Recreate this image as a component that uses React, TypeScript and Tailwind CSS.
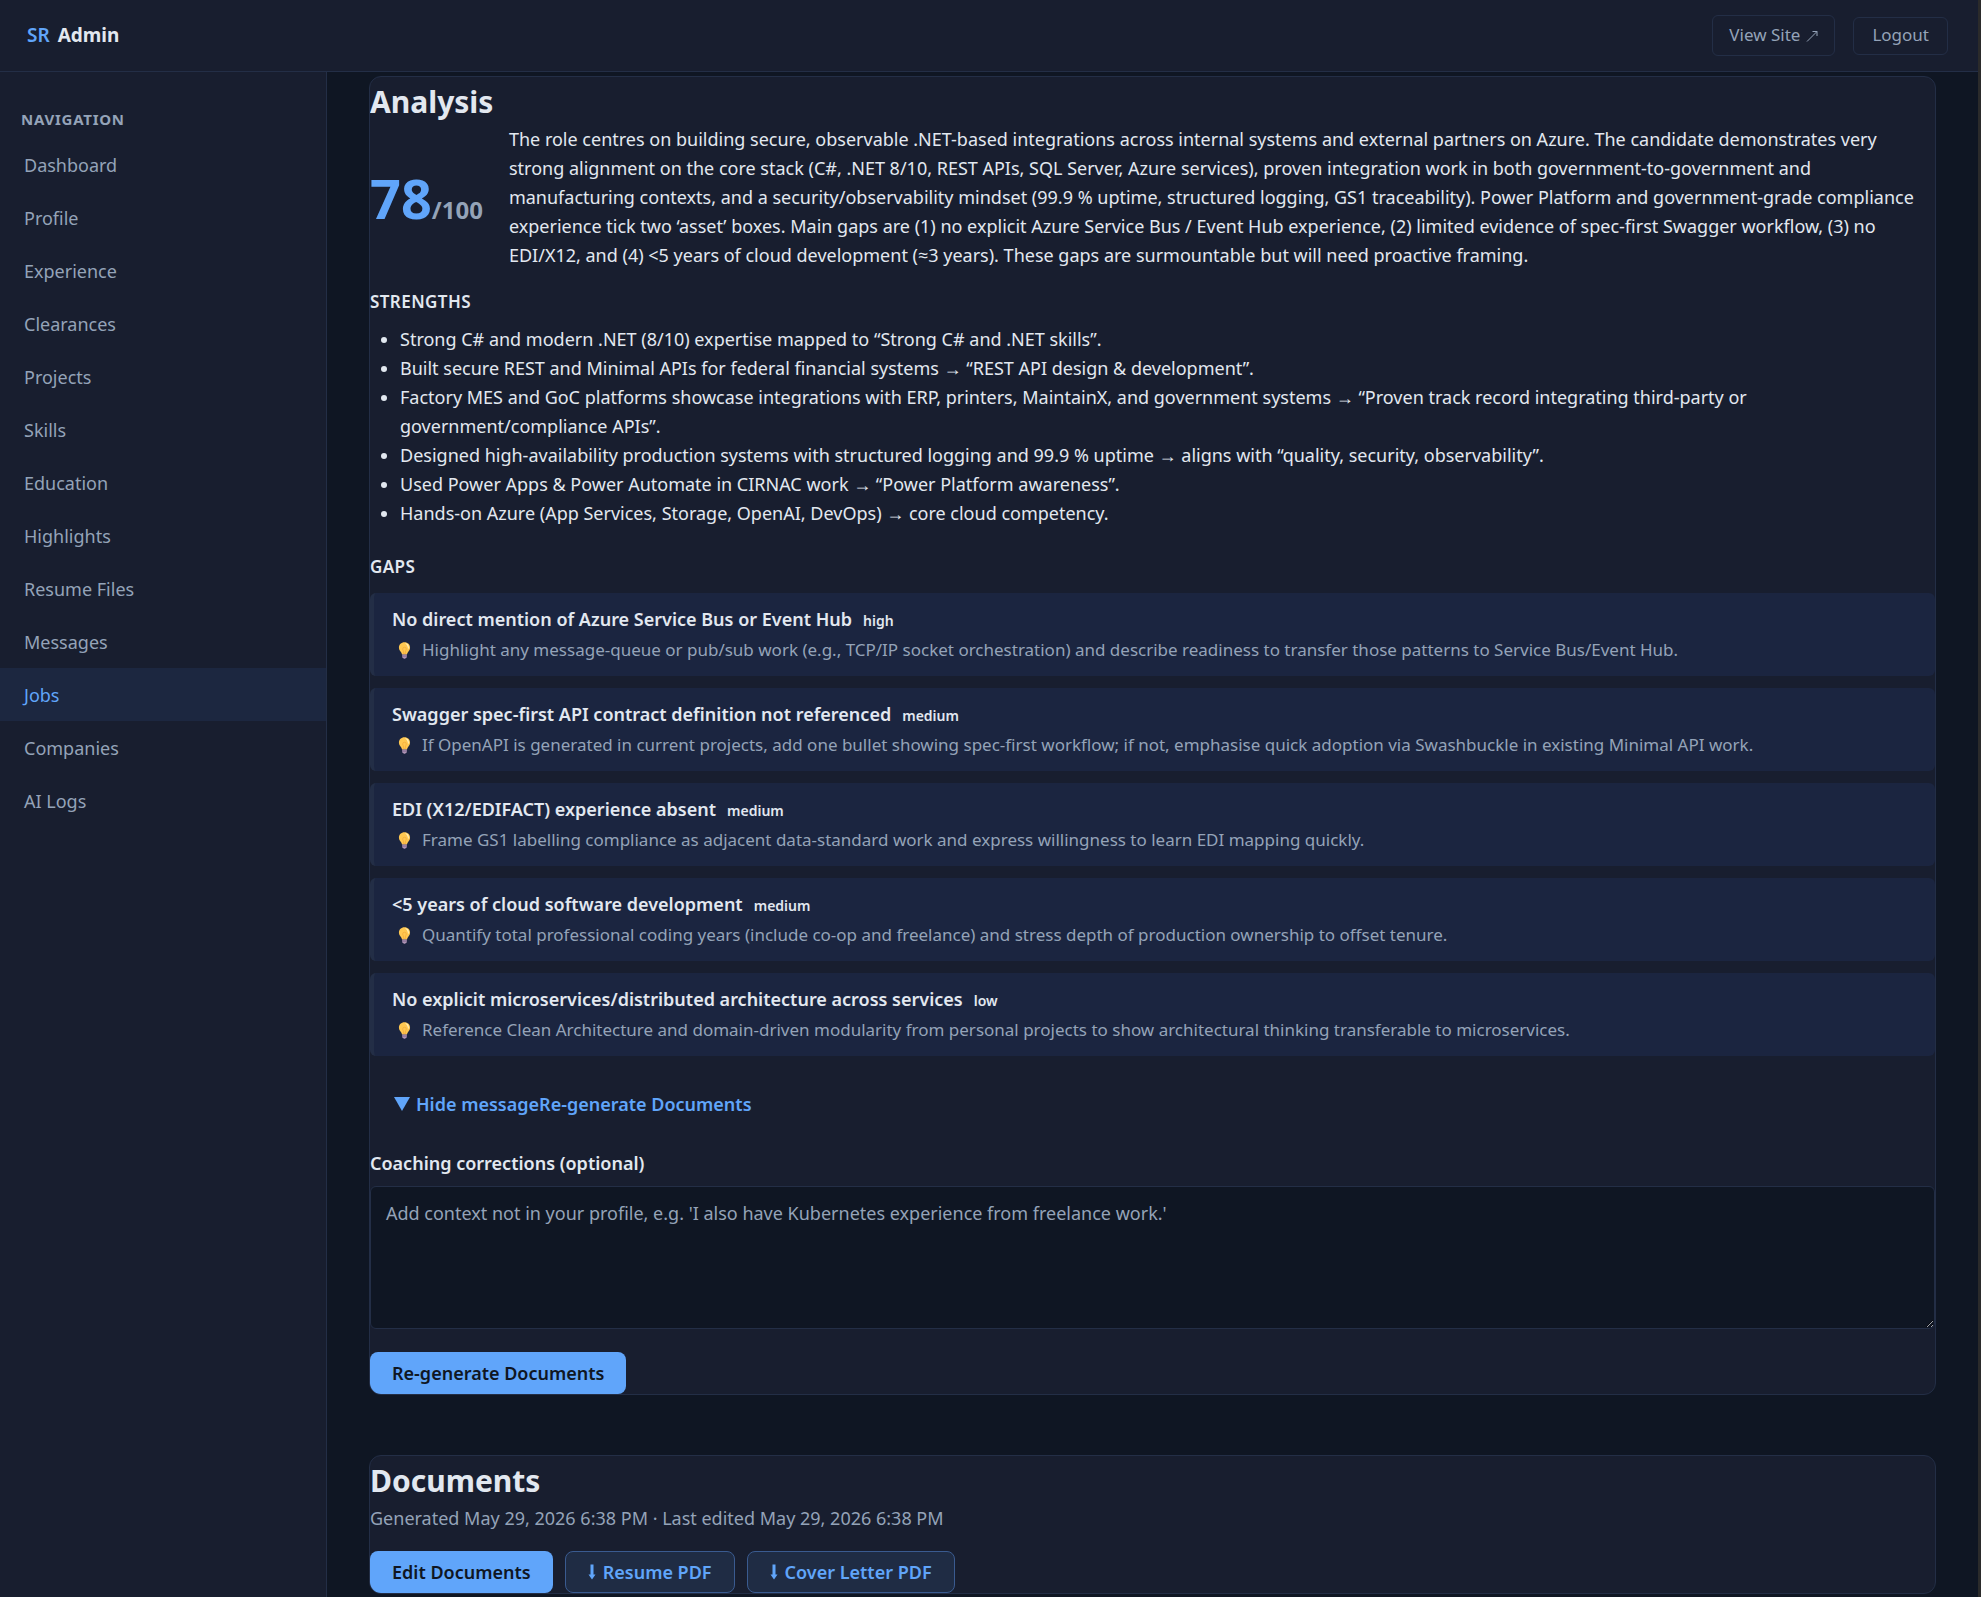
import { useState } from "react";

const navItems = [
  "Dashboard",
  "Profile",
  "Experience",
  "Clearances",
  "Projects",
  "Skills",
  "Education",
  "Highlights",
  "Resume Files",
  "Messages",
  "Jobs",
  "Companies",
  "AI Logs",
];

const strengths = [
  "Strong C# and modern .NET (8/10) expertise mapped to “Strong C# and .NET skills”.",
  "Built secure REST and Minimal APIs for federal financial systems → “REST API design & development”.",
  "Factory MES and GoC platforms showcase integrations with ERP, printers, MaintainX, and government systems → “Proven track record integrating third-party or government/compliance APIs”.",
  "Designed high-availability production systems with structured logging and 99.9 % uptime → aligns with “quality, security, observability”.",
  "Used Power Apps & Power Automate in CIRNAC work → “Power Platform awareness”.",
  "Hands-on Azure (App Services, Storage, OpenAI, DevOps) → core cloud competency.",
];

const gaps = [
  {
    title: "No direct mention of Azure Service Bus or Event Hub",
    severity: "high",
    tip: "Highlight any message-queue or pub/sub work (e.g., TCP/IP socket orchestration) and describe readiness to transfer those patterns to Service Bus/Event Hub.",
  },
  {
    title: "Swagger spec-first API contract definition not referenced",
    severity: "medium",
    tip: "If OpenAPI is generated in current projects, add one bullet showing spec-first workflow; if not, emphasise quick adoption via Swashbuckle in existing Minimal API work.",
  },
  {
    title: "EDI (X12/EDIFACT) experience absent",
    severity: "medium",
    tip: "Frame GS1 labelling compliance as adjacent data-standard work and express willingness to learn EDI mapping quickly.",
  },
  {
    title: "<5 years of cloud software development",
    severity: "medium",
    tip: "Quantify total professional coding years (include co-op and freelance) and stress depth of production ownership to offset tenure.",
  },
  {
    title: "No explicit microservices/distributed architecture across services",
    severity: "low",
    tip: "Reference Clean Architecture and domain-driven modularity from personal projects to show architectural thinking transferable to microservices.",
  },
];

function BulbIcon() {
  return (
    <svg viewBox="0 0 14 20" className="h-[19px] w-[13px] shrink-0" aria-hidden="true">
      <path d="M7 1C3.400 1 1 3.500 1 6.700c0 2 .9 3.300 1.900 4.600.8 1 1.200 1.900 1.400 3h5.400c.2-1.100.6-2 1.400-3 1-1.300 1.900-2.600 1.900-4.600C13 3.500 10.600 1 7 1z" fill="#ffc850" />
      <path d="M7.500 2c2.600.2 4.200 2 4.200 4.500 0 .8-.3 1.500-.8 2.100C10.700 5.600 9.600 3.500 7.500 2z" fill="#fff3c4" />
      <path d="M5 8.500a2 2 0 0 1 4 0c0 1.200-1 1.500-1 3v2H6v-2c0-1.500-1-1.800-1-3z" fill="none" stroke="#f4ab3c" strokeWidth=".8" />
      <path d="M4.500 14.300h5v2.500c0 .8-.6 1.300-1.200 1.400l-.5.800H6.200l-.5-.8c-.6-.1-1.200-.6-1.200-1.400z" fill="#b094b5" />
      <path d="M4.500 16h5" stroke="#6f5a83" strokeWidth=".8" />
    </svg>
  );
}

function DownArrow() {
  return (
    <svg viewBox="0 0 8 18" className="h-[18px] w-2" fill="currentColor" aria-hidden="true">
      <path d="M2.500 1.500h3v10H7.500L4 16.500.5 11.500h2z" />
    </svg>
  );
}

function PdfButton({ label }: { label: string }) {
  return (
    <button className="flex h-[42px] items-center gap-[7px] rounded-lg border border-[#3a5b90] bg-[#1f2c44] px-[22px] font-semibold text-[#60a5fa]">
      <DownArrow />
      {label}
    </button>
  );
}

export default function App() {
  const [open, setOpen] = useState(true);
  const [notes, setNotes] = useState("");

  return (
    <div className="flex min-h-screen flex-col border-r-[3px] border-[#2b2b2b] bg-[#0f1623] font-['Noto_Sans','Open_Sans',sans-serif] text-lg text-[#e2e8f0]">
      {/* Top bar */}
      <header className="flex h-[72px] shrink-0 items-center justify-between border-b border-[#232e46] bg-[#181e2f] pr-[30px] pl-[27px]">
        <div className="flex items-center gap-2">
          <span className="text-[19px] font-semibold text-[#60a5fa]">SR</span>
          <span className="text-[19px] font-bold">Admin</span>
        </div>
        <div className="flex items-center gap-[18px]">
          <a href="#site" className="flex h-[41px] items-center gap-1.5 rounded-md border border-[#232e46] px-4 text-[17px] text-[#94a3b8]">
            View Site
            <svg viewBox="0 0 12 12" className="size-3" fill="none" stroke="currentColor" strokeWidth="1" aria-hidden="true">
              <path d="M1 11.500 11 1.500M6.500 1.500H11V6" />
            </svg>
          </a>
          <button className="h-[38px] rounded-md border border-[#232e46] px-[18px] text-[17px] text-[#94a3b8]">Logout</button>
        </div>
      </header>

      <div className="flex flex-1">
        {/* Sidebar */}
        <aside className="w-[327px] shrink-0 border-r border-[#232e46] bg-[#181e2f] pt-9">
          <h2 className="mb-[7px] px-[21px] text-[15px] leading-[23px] font-bold tracking-wider text-[#94a3b8] uppercase">Navigation</h2>
          <nav>
            {navItems.map((item) => (
              <a
                key={item}
                href={`#${item.toLowerCase().replace(" ", "-")}`}
                className={`flex h-[53px] items-center px-6 ${item === "Jobs" ? "bg-[#1c2740] text-[#60a5fa]" : "text-[#94a3b8]"}`}
              >
                {item}
              </a>
            ))}
          </nav>
        </aside>

        <main className="min-w-0 flex-1 px-[42px] pt-1">
          {/* Analysis */}
          <section className="overflow-hidden rounded-xl border border-[#232e46] bg-[#181e2f]">
            <h2 className="mt-0.5 text-[30px] leading-[45px] font-bold">Analysis</h2>
            <div className="mt-px flex items-center gap-[26px]">
              <div className="flex items-baseline font-bold">
                <span className="text-[54px] text-[#60a5fa]">78</span>
                <span className="text-2xl text-[#94a3b8]">/100</span>
              </div>
              <p className="leading-[29px]">
                The role centres on building secure, observable .NET-based integrations across internal systems and external partners on Azure. The candidate demonstrates very strong alignment on the core stack (C#, .NET 8/10, REST APIs, SQL Server, Azure services), proven integration work in both government-to-government and manufacturing contexts, and a security/observability mindset (99.9 % uptime, structured logging, GS1 traceability). Power Platform and government-grade compliance experience tick two ‘asset’ boxes. Main gaps are (1) no explicit Azure Service Bus / Event Hub experience, (2) limited evidence of spec-first Swagger workflow, (3) no EDI/X12, and (4) &lt;5 years of cloud development (≈3 years). These gaps are surmountable but will need proactive framing.
              </p>
            </div>

            <h3 className="mt-[17px] text-[17px] leading-[29px] font-semibold tracking-wide uppercase">Strengths</h3>
            <ul className="mt-[9px] list-disc pl-[30px] leading-[29px]">
              {strengths.map((s) => (
                <li key={s}>{s}</li>
              ))}
            </ul>

            <h3 className="mt-6 text-[17px] leading-[29px] font-semibold tracking-wide uppercase">Gaps</h3>
            <div className="mt-3 flex flex-col gap-3">
              {gaps.map((gap) => (
                <div key={gap.title} className="rounded-md border-l-4 border-[#232e46] bg-[#1b2540] px-[18px] py-3">
                  <div className="flex items-baseline gap-[11px] leading-[29px] font-semibold">
                    <span>{gap.title}</span>
                    <span className="text-sm">{gap.severity}</span>
                  </div>
                  <div className="flex items-center gap-[11px] pt-0.5 pl-[6px] text-[17px] leading-[28px] text-[#94a3b8]">
                    <BulbIcon />
                    <span>{gap.tip}</span>
                  </div>
                </div>
              ))}
            </div>

            <div className="mt-[27px] flex h-[42px] items-center px-6 font-semibold text-[#60a5fa]">
              <button onClick={() => setOpen(!open)} className="flex items-center gap-[6px]">
                <svg viewBox="0 0 16 14" className="h-3.5 w-4" fill="currentColor" aria-hidden="true">
                  <path d={open ? "M0 0h16L8 14z" : "M2 0v14l12-7z"} />
                </svg>
                {open ? "Hide message" : "Show message"}
              </button>
              <button>Re-generate Documents</button>
            </div>

            <label htmlFor="coaching" className="mt-6 block leading-[29px] font-semibold">
              Coaching corrections (optional)
            </label>
            <textarea
              id="coaching"
              value={notes}
              onChange={(e) => setNotes(e.target.value)}
              placeholder="Add context not in your profile, e.g. 'I also have Kubernetes experience from freelance work.'"
              className="mt-2 block h-[143px] w-full rounded-md border border-[#232e46] bg-[#0f1623] px-[15px] py-3 leading-[29px] placeholder:text-[#94a3b8]"
            />
            <button className="mt-[23px] block h-[42px] rounded-lg bg-[#60a5fa] px-[22px] font-semibold text-[#0f1623]">
              Re-generate Documents
            </button>
          </section>

          {/* Documents */}
          <section className="mt-[60px] overflow-hidden rounded-xl border border-[#232e46] bg-[#181e2f]">
            <h2 className="mt-0.5 text-[30px] leading-[45px] font-bold">Documents</h2>
            <p className="mt-px leading-[29px] text-[#94a3b8]">Generated May 29, 2026 6:38 PM · Last edited May 29, 2026 6:38 PM</p>
            <div className="mt-[18px] flex gap-3">
              <button className="h-[42px] rounded-lg bg-[#60a5fa] px-[22px] font-semibold text-[#0f1623]">Edit Documents</button>
              <PdfButton label="Resume PDF" />
              <PdfButton label="Cover Letter PDF" />
            </div>
          </section>
        </main>
      </div>
    </div>
  );
}
